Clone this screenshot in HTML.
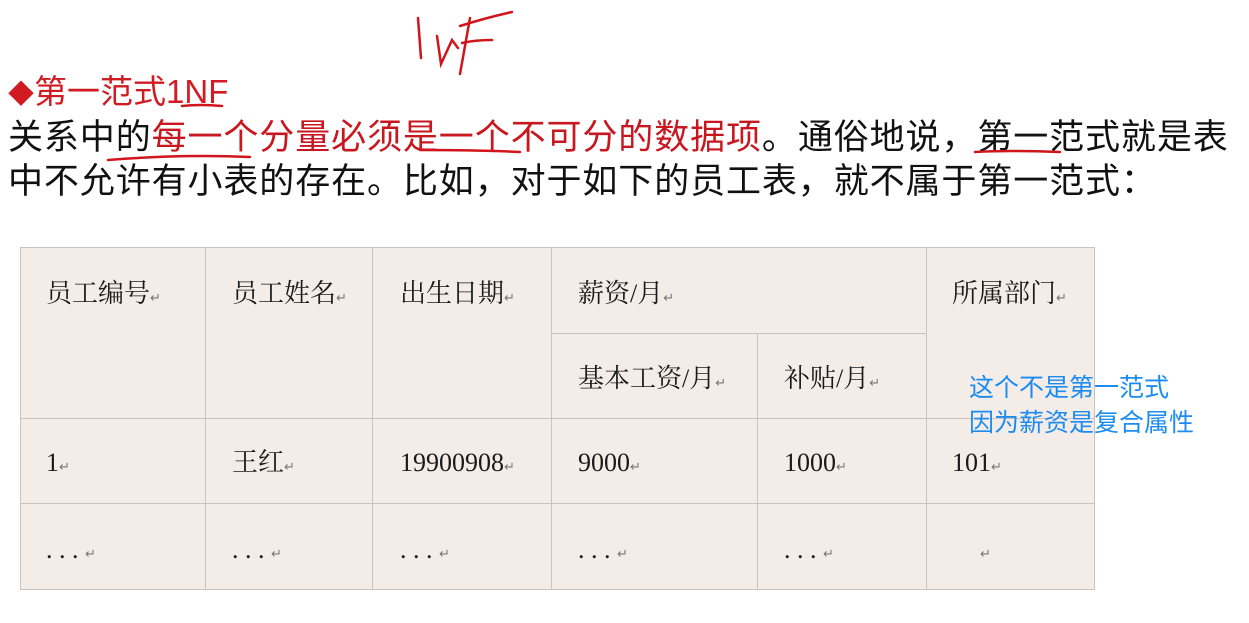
<!DOCTYPE html>
<html><head><meta charset="utf-8"><style>
body{margin:0;width:1249px;height:623px;background:#fff;position:relative;overflow:hidden;font-family:"Liberation Sans","Noto Sans CJK SC",sans-serif}
.a{position:absolute;white-space:nowrap}
.c{position:absolute;background:#f3ece7;box-sizing:border-box;border-right:1px solid #c9c2be;border-bottom:1px solid #c9c2be}
.t{position:absolute;font-family:"Liberation Serif","Noto Serif CJK SC",serif;font-size:26px;line-height:30px;color:#1a1a1a;white-space:nowrap}
.r{font-size:13px;color:#777}
</style></head><body>
<div class="a" style="left:8px;top:73px;font-size:33px;color:#d01b22;line-height:38px"><span style="font-size:26px">◆</span>第一范式1NF</div>
<div class="a" style="left:8px;top:116px;font-size:35px;color:#111;line-height:44px;letter-spacing:0.9px">关系中的<span style="color:#c8171f">每一个分量必须是一个不可分的数据项</span>。通俗地说，第一范式就是表</div>
<div class="a" style="left:8px;top:160px;font-size:35px;color:#111;line-height:44px;letter-spacing:0.9px">中不允许有小表的存在。比如，对于如下的员工表，就不属于第一范式：</div>
<svg class="a" style="left:0;top:0" width="1249" height="200">
<g stroke="#d0151c" stroke-width="2.5" fill="none" stroke-linecap="round">
<path d="M418 18 L421 58"/>
<path d="M437 36 L441 64 L452 40 L458 48"/>
<path d="M470 18 L460 74"/>
<path d="M460 26 Q485 18 512 12"/>
<path d="M462 43 Q475 40 492 40"/>
<path d="M182 106 Q200 104 222 106"/>
<path d="M108 160 Q180 154 250 157"/>
<path d="M420 150 Q480 150 520 152"/>
<path d="M975 152 Q1010 150 1060 152"/>
</g></svg>
<div class="c" style="left:20px;top:247px;width:1075px;height:343px;border:1px solid #c9c2be"></div>
<div class="c" style="left:21px;top:248px;width:185px;height:171px"></div>
<div class="c" style="left:206px;top:248px;width:167px;height:171px"></div>
<div class="c" style="left:373px;top:248px;width:179px;height:171px"></div>
<div class="c" style="left:552px;top:248px;width:375px;height:86px"></div>
<div class="c" style="left:552px;top:334px;width:206px;height:85px"></div>
<div class="c" style="left:758px;top:334px;width:169px;height:85px"></div>
<div class="c" style="left:927px;top:248px;width:167px;height:171px;border-right:none"></div>
<div class="c" style="left:21px;top:419px;width:185px;height:85px"></div>
<div class="c" style="left:206px;top:419px;width:167px;height:85px"></div>
<div class="c" style="left:373px;top:419px;width:179px;height:85px"></div>
<div class="c" style="left:552px;top:419px;width:206px;height:85px"></div>
<div class="c" style="left:758px;top:419px;width:169px;height:85px"></div>
<div class="c" style="left:927px;top:419px;width:167px;height:85px;border-right:none"></div>
<div class="c" style="left:21px;top:504px;width:185px;height:85px;border-bottom:none"></div>
<div class="c" style="left:206px;top:504px;width:167px;height:85px;border-bottom:none"></div>
<div class="c" style="left:373px;top:504px;width:179px;height:85px;border-bottom:none"></div>
<div class="c" style="left:552px;top:504px;width:206px;height:85px;border-bottom:none"></div>
<div class="c" style="left:758px;top:504px;width:169px;height:85px;border-bottom:none"></div>
<div class="c" style="left:927px;top:504px;width:167px;height:85px;border:none"></div>
<div class="t" style="left:46px;top:279px">员工编号<span class="r">↵</span></div>
<div class="t" style="left:232px;top:279px">员工姓名<span class="r">↵</span></div>
<div class="t" style="left:400px;top:279px">出生日期<span class="r">↵</span></div>
<div class="t" style="left:578px;top:279px">薪资/月<span class="r">↵</span></div>
<div class="t" style="left:952px;top:279px">所属部门<span class="r">↵</span></div>
<div class="t" style="left:578px;top:364px">基本工资/月<span class="r">↵</span></div>
<div class="t" style="left:784px;top:364px">补贴/月<span class="r">↵</span></div>
<div class="t" style="left:46px;top:448px">1<span class="r">↵</span></div>
<div class="t" style="left:232px;top:448px">王红<span class="r">↵</span></div>
<div class="t" style="left:400px;top:448px">19900908<span class="r">↵</span></div>
<div class="t" style="left:578px;top:448px">9000<span class="r">↵</span></div>
<div class="t" style="left:784px;top:448px">1000<span class="r">↵</span></div>
<div class="t" style="left:952px;top:448px">101<span class="r">↵</span></div>
<div class="t" style="left:46px;top:535px">. . . <span class="r">↵</span></div>
<div class="t" style="left:232px;top:535px">. . . <span class="r">↵</span></div>
<div class="t" style="left:400px;top:535px">. . . <span class="r">↵</span></div>
<div class="t" style="left:578px;top:535px">. . . <span class="r">↵</span></div>
<div class="t" style="left:784px;top:535px">. . . <span class="r">↵</span></div>
<div class="t" style="left:980px;top:535px"><span class="r">↵</span></div>
<div class="a" style="left:969px;top:371px;font-size:25px;color:#1c8cf0;line-height:35px">这个不是第一范式<br>因为薪资是复合属性</div>
</body></html>
